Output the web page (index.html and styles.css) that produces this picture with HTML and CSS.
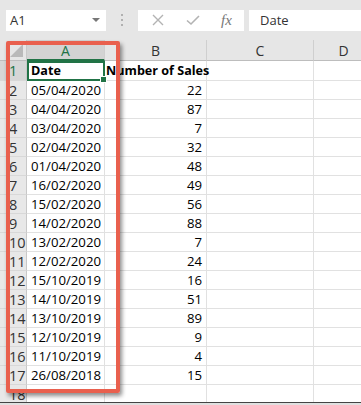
FILE: index.html
```html
<!DOCTYPE html>
<html lang="en">
<head>
    <meta charset="UTF-8">
    <meta name="viewport" content="width=device-width, initial-scale=1.0">
    <title>Sales sheet</title>
    <link rel="stylesheet" href="styles.css">
</head>
<body>
    <div class="toolbar">
        <div class="name-box">
            <span>A1</span>
            <span class="caret"></span>
        </div>
        <div class="grip"><i></i><i></i><i></i></div>
        <div class="fx-buttons">
            <svg class="btn-icon" width="14" height="14" viewBox="0 0 14 14"><path d="M2 2 L12 12 M12 2 L2 12" stroke="#b3b3b3" stroke-width="1.4" fill="none"/></svg>
            <svg class="btn-icon" width="16" height="14" viewBox="0 0 16 14"><path d="M2 7.5 L6 11 L14 3" stroke="#b3b3b3" stroke-width="1.6" fill="none"/></svg>
            <span class="fx">fx</span>
        </div>
        <div class="formula">Date</div>
    </div>

    <div class="sheet">
        <div class="grid" id="grid">
            <div class="corner"></div>
            <div class="col-head active">A</div>
            <div class="col-head">B</div>
            <div class="col-head">C</div>
            <div class="col-head">D</div>
        </div>
        <div class="highlight"></div>
    </div>
    <div class="bottom-bar"></div>

    <script>
        const rows = [
            ['Date', 'Number of Sales'],
            ['05/04/2020', 22], ['04/04/2020', 87], ['03/04/2020', 7],
            ['02/04/2020', 32], ['01/04/2020', 48], ['16/02/2020', 49],
            ['15/02/2020', 56], ['14/02/2020', 88], ['13/02/2020', 7],
            ['12/02/2020', 24], ['15/10/2019', 16], ['14/10/2019', 51],
            ['13/10/2019', 89], ['12/10/2019', 9], ['11/10/2019', 4],
            ['26/08/2018', 15], ['', '']
        ];

        const grid = document.getElementById('grid');
        rows.forEach((r, i) => {
            const n = i + 1;
            let html = `<div class="row-head${n === 1 ? ' active' : ''}">${n}</div>`;
            if (n === 1) {
                html += `<div class="cell bold selected">${r[0]}</div>`;
                html += `<div class="cell bold tight">${r[1]}</div>`;
            } else {
                html += `<div class="cell">${r[0]}</div>`;
                html += `<div class="cell num">${r[1]}</div>`;
            }
            html += '<div class="cell"></div><div class="cell"></div>';
            grid.insertAdjacentHTML('beforeend', html);
        });
    </script>
</body>
</html>
```

FILE: styles.css
```css
body {
    margin: 0;
    width: 361px;
    height: 405px;
    overflow: hidden;
    background: #fff;
    font-family: "Open Sans", sans-serif;
    color: #000;
}
.toolbar {
    height: 40px;
    background: #e6e6e6;
    display: flex;
    align-items: center;
    padding-left: 6px;
    box-sizing: border-box;
}
.name-box {
    width: 100px;
    height: 21px;
    background: #fff;
    display: flex;
    align-items: center;
    justify-content: space-between;
    padding: 0 6px 0 4px;
    box-sizing: border-box;
    font-size: 13px;
    color: #333;
}
.caret {
    width: 0;
    height: 0;
    border-left: 4px solid transparent;
    border-right: 4px solid transparent;
    border-top: 4px solid #777;
}
.grip {
    width: 32px;
    display: flex;
    flex-direction: column;
    align-items: center;
    gap: 3px;
}
.grip i {
    width: 2px;
    height: 2px;
    background: #b0b0b0;
}
.fx-buttons {
    width: 106px;
    height: 21px;
    background: #fff;
    display: flex;
    align-items: center;
    box-sizing: border-box;
    padding-left: 13px;
    gap: 20px;
}
.fx {
    font-family: "Liberation Serif", serif;
    font-style: italic;
    font-size: 15px;
    color: #777;
}
.formula {
    margin-left: 5px;
    flex: 1;
    height: 21px;
    background: #fff;
    font-size: 13px;
    color: #333;
    line-height: 21px;
    padding-left: 11px;
}
.sheet {
    position: relative;
}
.grid {
    display: grid;
    grid-template-columns: 27px 78px 102px 107px 60px;
    grid-template-rows: 21px 20px repeat(17, 19px);
}
.corner {
    background: #e6e6e6;
    border-right: 1px solid #c8c8c8;
    border-bottom: 1px solid #bdbdbd;
    position: relative;
}
.corner::after {
    content: "";
    position: absolute;
    right: 3px;
    bottom: 3px;
    border-left: 13px solid transparent;
    border-bottom: 13px solid #b9b9b9;
}
.col-head {
    background: #e6e6e6;
    border-right: 1px solid #cfcfcf;
    border-bottom: 1px solid #bdbdbd;
    font-size: 14px;
    color: #333;
    text-align: center;
    line-height: 21px;
}
.col-head.active {
    background: #d3d3d3;
    color: #217346;
    border-bottom: 2px solid #217346;
}
.row-head {
    background: #e8e8e8;
    border-right: 1px solid #c8c8c8;
    border-bottom: 1px solid #d8d8d8;
    font-size: 14.5px;
    color: #333;
    padding-left: 9px;
    line-height: 19px;
}
.row-head.active {
    color: #217346;
    background: #d6d6d6;
    line-height: 20px;
}
.cell {
    border-right: 1px solid #e1e1e1;
    border-bottom: 1px solid #e1e1e1;
    font-size: 13.2px;
    line-height: 19px;
    padding: 0 4px;
    white-space: nowrap;
    position: relative;
}
.cell.bold {
    font-weight: bold;
    font-size: 12.6px;
    line-height: 20px;
}
.cell.tight {
    padding-left: 1px;
}
.cell.num {
    text-align: right;
}
.cell.selected {
    outline: 2px solid #217346;
    outline-offset: -2px;
    z-index: 1;
    background: #fff;
}
.cell.selected::after {
    content: "";
    position: absolute;
    right: -3px;
    bottom: -3px;
    width: 5px;
    height: 5px;
    background: #217346;
    border: 1px solid #fff;
}
.highlight {
    position: absolute;
    left: 6px;
    top: 1px;
    width: 106px;
    height: 344px;
    border: 4px solid #e9604e;
    border-radius: 2px;
    box-shadow: 2px 3px 4px rgba(0, 0, 0, 0.45);
    z-index: 2;
}
.bottom-bar {
    position: absolute;
    left: 0;
    right: 0;
    top: 402px;
    height: 3px;
    background: #e0e0e0;
    border-top: 1px solid #444;
}
```
